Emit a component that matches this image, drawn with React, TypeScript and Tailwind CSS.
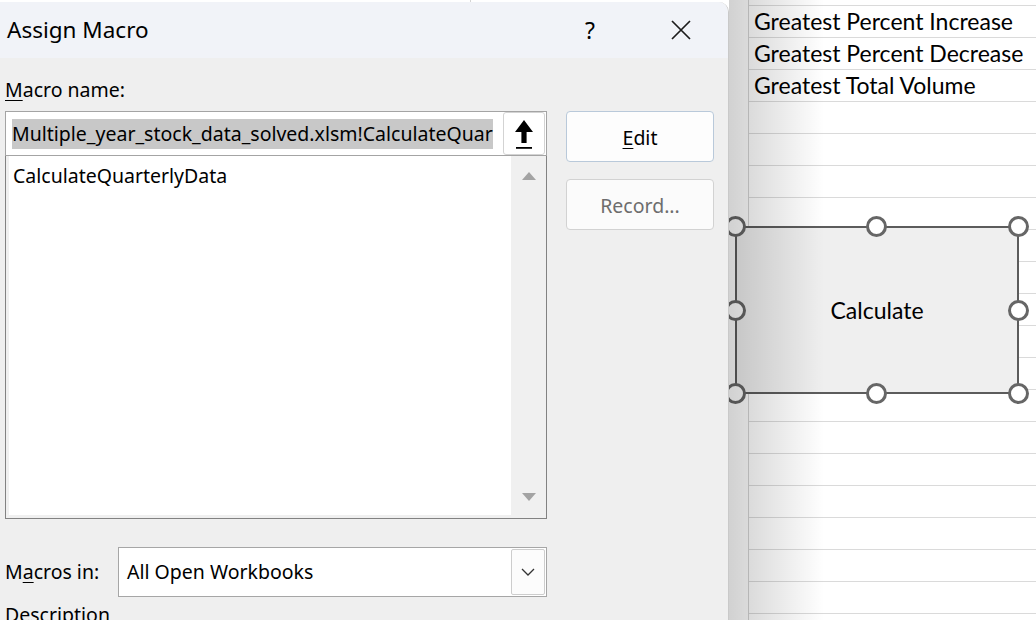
import React from "react";

const ui = { fontFamily: '"Noto Sans", "Open Sans", sans-serif' };
const xl = { fontFamily: 'Lato, "Liberation Sans", sans-serif' };

const rows = Array.from({ length: 20 });

const Handle = ({ x, y }: { x: number; y: number }) => (
  <div
    className="absolute w-[21px] h-[21px] rounded-full bg-white border-[3.5px] border-[#666666]"
    style={{ left: x - 10.5, top: y - 10.5 }}
  />
);

const Sheet = () => (
  <div className="absolute inset-0 bg-white">
    <div className="flex h-full">
      <div className="w-[749px] shrink-0 border-r border-[#d4d4d4]" />
      <div className="flex-1 flex flex-col pt-[5px]" style={xl}>
        {rows.map((_, i) => (
          <div
            key={i}
            className="h-[32px] shrink-0 border-t border-[#dadada] pl-[5px] text-[23px] leading-[31px] text-black whitespace-nowrap"
          >
            {i === 0 && "Greatest Percent Increase"}
            {i === 1 && "Greatest Percent Decrease"}
            {i === 2 && "Greatest Total Volume"}
          </div>
        ))}
      </div>
    </div>
    {/* column line peeking above the dialog */}
    <div className="absolute left-[470px] top-0 h-[3px] border-l border-[#d4d4d4]" />
  </div>
);

const Shape = () => {
  const pts: [number, number][] = [
    [735, 226], [876, 226], [1018, 226],
    [735, 310], [1018, 310],
    [735, 393], [876, 393], [1018, 393],
  ];
  return (
    <>
      <div
        className="absolute left-[735px] top-[226px] w-[284px] h-[168px] bg-[#efefef] border-2 border-[#5c5c5c] flex items-center justify-center text-[23px] text-black"
        style={xl}
      >
        Calculate
      </div>
      {pts.map(([x, y], i) => (
        <Handle key={i} x={x} y={y} />
      ))}
    </>
  );
};

const UpArrow = () => (
  <svg width="22" height="34" viewBox="0 0 22 34">
    <path d="M11 3 L20 15 L13.6 15 L13.6 26 L8.4 26 L8.4 15 L2 15 Z" fill="#000" />
    <rect x="3" y="30" width="16" height="1.8" fill="#000" />
  </svg>
);

const Dialog = () => (
  <div
    className="absolute left-0 top-[2px] w-[729px] h-[640px] bg-[#efefef] rounded-tr-[10px] border-r border-[#c9c9c9] overflow-hidden text-[#1a1a1a]"
    style={ui}
  >
    {/* title bar */}
    <div className="h-[56px] bg-[#f1f3f8] flex items-center pl-[7px] pr-[37px]">
      <span className="text-[22.5px] text-black leading-none flex-1">Assign Macro</span>
      <span className="text-[23px] text-black leading-none mr-[76px]">?</span>
      <svg width="20" height="20" viewBox="0 0 20 20">
        <path d="M1 1 L19 19 M19 1 L1 19" stroke="#1c1c1c" strokeWidth="1.7" />
      </svg>
    </div>

    <div className="flex gap-[19px] pl-[5px] pt-[20px]">
      <div className="w-[542px] flex flex-col">
        <div className="h-[24px] text-[19.5px] leading-[24px] text-black">
          <span className="underline underline-offset-[3px]">M</span>acro name:
        </div>

        {/* macro name input */}
        <div className="mt-[9px] h-[45px] bg-white border border-[#a4a4a4] flex items-center pl-[6px] pr-[1px]">
          <div className="flex-1 overflow-hidden whitespace-nowrap">
            <span className="bg-[#c8c8c8] text-[19.5px] leading-[30px] text-black inline-block">
              Multiple_year_stock_data_solved.xlsm!CalculateQuar
            </span>
          </div>
          <div className="w-[42px] h-[43px] ml-[9px] bg-white border border-[#d3d3d3] rounded-[3px] flex items-center justify-center">
            <UpArrow />
          </div>
        </div>

        {/* macro list */}
        <div className="h-[363px] border border-[#828282] border-t-0 bg-[#f0f0f0] flex pl-[3px] pb-[3px]">
          <div className="flex-1 bg-white pl-[4px] pt-[5px] text-[19.5px] leading-[30px] text-black">
            CalculateQuarterlyData
          </div>
          <div className="w-[35px] flex flex-col items-center justify-between pt-[16px] pb-[14px]">
            <svg width="14" height="8" viewBox="0 0 14 8">
              <path d="M7 0 L14 8 L0 8 Z" fill="#a3a3a3" />
            </svg>
            <svg width="14" height="8" viewBox="0 0 14 8">
              <path d="M0 0 L14 0 L7 8 Z" fill="#a3a3a3" />
            </svg>
          </div>
        </div>

        {/* macros in */}
        <div className="mt-[28px] h-[50px] flex items-center">
          <div className="w-[113px] text-[19.5px] text-black">
            M<span className="underline underline-offset-[3px]">a</span>cros in:
          </div>
          <div className="flex-1 h-full bg-white border border-[#a6a6a6] flex items-center pl-[8px] pr-[1px]">
            <span className="flex-1 text-[19.5px] text-black">All Open Workbooks</span>
            <div className="w-[34px] h-[46px] bg-[#fcfcfc] border border-[#cdcdcd] rounded-[2px] flex items-center justify-center">
              <svg width="14" height="8" viewBox="0 0 14 8">
                <path d="M1 1 L7 7 L13 1" stroke="#333" strokeWidth="1.3" fill="none" />
              </svg>
            </div>
          </div>
        </div>

        <div className="mt-[6px] text-[19.5px] leading-[24px] text-black">Description</div>
      </div>

      {/* buttons */}
      <div className="w-[148px] flex flex-col gap-[17px] mt-[33px]">
        <div className="h-[51px] bg-[#fdfdfd] border border-[#b9c9da] rounded-[4px] flex items-center justify-center text-[19.5px] text-black">
          <span className="mt-[2px]">
            <span className="underline underline-offset-[3px]">E</span>dit
          </span>
        </div>
        <div className="h-[51px] bg-[#fbfbfb] border border-[#d2d2d2] rounded-[4px] flex items-center justify-center text-[19.5px] text-[#6d6d6d]">
          <span className="mt-[2px]">Record...</span>
        </div>
      </div>
    </div>
  </div>
);

export default function App() {
  return (
    <div className="relative w-[1036px] h-[620px] overflow-hidden bg-white">
      <Sheet />
      <Shape />
      {/* window shadow */}
      <div className="absolute left-[729px] top-0 w-[95px] h-full bg-gradient-to-r from-[#0000002e] to-transparent pointer-events-none" />
      <Dialog />
    </div>
  );
}
